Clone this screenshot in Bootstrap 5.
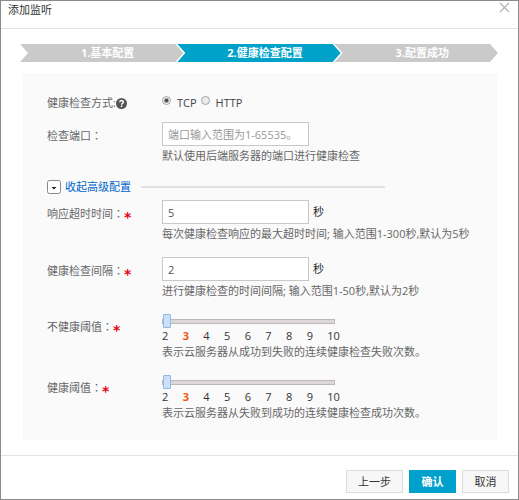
<!DOCTYPE html>
<html lang="zh-CN">
<head>
  <meta charset="UTF-8">
  <meta name="viewport" content="width=device-width, initial-scale=1">
  <title>添加监听</title>
  <!-- Bootstrap 5 CDN -->
  <link href="https://cdn.jsdelivr.net/npm/bootstrap@5.3.0/dist/css/bootstrap.min.css" rel="stylesheet">
  <style>
    body {
      font-family: "Open Sans", "Noto Sans CJK SC", sans-serif;
      font-size: 11px;
      line-height: 16px;
      color: #666;
    }
    .dialog-box { border: 1px solid #8a8a8a; background: #fff; }
    .dialog-head { height: 28px; padding: 1px 8px 0 7px; border-bottom: 1px solid #e3e3e3; }
    .dialog-head h1 { font-size: 11px; line-height: 16px; color: #333; }
    .close-x { width: 12px; height: 12px; }
    .close-x svg { width: 12px; height: 12px; }
    .dialog-main { padding: 15px 20px 15px 19px; }

    /* ステップ表示 */
    .step-item {
      height: 18px;
      padding-left: 12px;
      line-height: 18px;
      background: #cacaca;
      color: #fff;
      clip-path: polygon(0 0, calc(100% - 8px) 0, 100% 50%, calc(100% - 8px) 100%, 0 100%, 8px 50%);
    }
    .step-item + .step-item { margin-left: -6px; }
    .step-item.current { background: #00a2ca; }

    .config-panel { margin: 11px 1px 0 3px; padding: 22px 24px 4px; background: #fafafa; }
    .field-row { display: grid; grid-template-columns: 115px minmax(0, 1fr); margin-bottom: 15px; }
    .field-row.tight { margin-bottom: 11px; }
    .field-name { padding-top: 5px; }
    .tight .field-name { padding-top: 0; }
    .colon { font-family: "Noto Sans CJK TC", sans-serif; }
    .star { color: #e60012; font-family: "DejaVu Sans", sans-serif; font-size: 14px; font-weight: bold; line-height: 1; vertical-align: -4px; }
    .help-icon { width: 11px; height: 11px; }
    .text-field {
      width: 147px;
      height: 24px;
      padding: 0 5px;
      font-size: 11px;
      line-height: 16px;
      color: #555;
      border: 1px solid #c8c8c8;
      background: #fff;
    }
    .text-field::placeholder { color: #999; opacity: 1; }
    .hint { margin: 2px 0 0; }

    .choice-label { color: #444; }
    .choice {
      appearance: none;
      width: 9px;
      height: 9px;
      margin: 1px 6px 0 0;
      border: 1px solid #a5a5a5;
      border-radius: 50%;
      background: #ececec;
    }
    .choice:checked { background: radial-gradient(circle, #444 0 1px, #f2f2f2 3px); }

    .toggle-row { margin-bottom: 5px; }
    .toggle-btn { gap: 4px; color: #0066cc; line-height: 16px; }
    .toggle-btn svg { width: 14px; height: 14px; }
    .toggle-line { width: 244px; height: 2px; margin-left: 10px; background: #e3e3e3; }

    /* スライダー */
    .level-range { appearance: none; width: 173px; height: 14px; margin: 0; background: transparent; }
    .level-range::-webkit-slider-runnable-track { height: 5px; border: 1px solid #bdb9b9; background: #dcd8d8; }
    .level-range::-webkit-slider-thumb {
      appearance: none;
      width: 8px;
      height: 14px;
      margin-top: -6px;
      border: 1px solid #92b8e6;
      border-radius: 1px;
      background: #cbe0fa;
    }
    .level-range::-moz-range-track { height: 3px; border: 1px solid #bdb9b9; background: #dcd8d8; }
    .level-range::-moz-range-thumb { width: 6px; height: 12px; border: 1px solid #92b8e6; border-radius: 1px; background: #cbe0fa; }
    .level-marks { display: grid; grid-template-columns: repeat(9, 1fr); width: 186px; color: #333; }
    .level-marks .hot { color: #f0560f; }
    .slider-row .hint { margin-top: 0; }
    .slider-row .field-name { padding-top: 4px; }

    .dialog-foot { gap: 6px; padding: 14px 9px 6px; border-top: 1px solid #e3e3e3; }
    .foot-btn {
      min-width: 47px;
      height: 23px;
      padding: 0 11px;
      font-size: 11px;
      line-height: 16px;
      color: #333;
      border: 1px solid #ddd;
      border-radius: 0;
      background: #f7f7f7;
    }
    .foot-btn.main-btn { color: #fff; border-color: #00a0cc; background: #00a0cc; }
  </style>
</head>
<body>
  <div class="dialog-box d-flex flex-column min-vh-100">
    <header class="dialog-head d-flex justify-content-between align-items-start">
      <h1 class="m-0 fw-normal">添加监听</h1>
      <button type="button" class="close-x btn p-0 border-0 d-flex" aria-label="关闭">
        <svg viewBox="0 0 12 12" fill="none" stroke="#b5b5b5" stroke-width="1.3"><path d="M2 1L11 10M11 1L2 10"/></svg>
      </button>
    </header>

    <main class="dialog-main flex-grow-1">
      <ol class="list-unstyled d-flex m-0 text-center fw-bold">
        <li class="step-item flex-fill w-100">1.基本配置</li>
        <li class="step-item current flex-fill w-100" aria-current="step">2.健康检查配置</li>
        <li class="step-item flex-fill w-100">3.配置成功</li>
      </ol>

      <form class="config-panel">
        <!-- 检查方式 -->
        <div class="field-row tight" role="radiogroup" aria-labelledby="modeName">
          <div class="field-name d-flex align-items-center">
            <span id="modeName">健康检查方式:</span>
            <svg class="help-icon" viewBox="0 0 11 11"><circle cx="5.500" cy="5.500" r="5.500" fill="#555"/><path d="M3.700 4.200C3.700 1.900 7.400 1.900 7.400 4.100C7.400 5.400 5.600 5.300 5.600 6.700" fill="none" stroke="#fff" stroke-width="1.400"/><rect x="4.800" y="7.500" width="1.500" height="1.500" fill="#fff"/></svg>
          </div>
          <div class="d-flex gap-1">
            <label class="choice-label d-flex"><input class="choice" type="radio" name="mode" checked>TCP</label>
            <label class="choice-label d-flex"><input class="choice" type="radio" name="mode">HTTP</label>
          </div>
        </div>

        <div class="field-row">
          <label class="field-name" for="port">检查端口<span class="colon" lang="zh-TW">：</span></label>
          <div>
            <input class="text-field d-block" type="text" id="port" placeholder="端口输入范围为1-65535。">
            <p class="hint">默认使用后端服务器的端口进行健康检查</p>
          </div>
        </div>

        <!-- 高级配置 -->
        <div class="toggle-row d-flex align-items-center">
          <button type="button" class="toggle-btn d-flex align-items-center border-0 bg-transparent p-0" aria-expanded="true">
            <svg viewBox="0 0 14 14"><rect x=".5" y=".5" width="13" height="13" rx="2" fill="#fff" stroke="#888"/><path d="M4.500 7H9.500L7 9.500Z" fill="#222"/></svg>
            <span>收起高级配置</span>
          </button>
          <div class="toggle-line"></div>
        </div>

        <div class="field-row">
          <label class="field-name" for="timeout">响应超时时间<span class="colon" lang="zh-TW">：</span><span class="star">*</span></label>
          <div>
            <div class="d-flex align-items-center gap-1">
              <input class="text-field" type="text" id="timeout" value="5">
              <span class="text-dark">秒</span>
            </div>
            <p class="hint">每次健康检查响应的最大超时时间; 输入范围1-300秒,默认为5秒</p>
          </div>
        </div>

        <div class="field-row">
          <label class="field-name" for="interval">健康检查间隔<span class="colon" lang="zh-TW">：</span><span class="star">*</span></label>
          <div>
            <div class="d-flex align-items-center gap-1">
              <input class="text-field" type="text" id="interval" value="2">
              <span class="text-dark">秒</span>
            </div>
            <p class="hint">进行健康检查的时间间隔; 输入范围1-50秒,默认为2秒</p>
          </div>
        </div>

        <div class="field-row slider-row">
          <label class="field-name" for="unhealthy">不健康阈值<span class="colon" lang="zh-TW">：</span><span class="star">*</span></label>
          <div>
            <input class="level-range d-block" type="range" id="unhealthy" min="2" max="10" value="2">
            <div class="level-marks">
              <span>2</span><span class="hot fw-bold">3</span><span>4</span><span>5</span><span>6</span><span>7</span><span>8</span><span>9</span><span>10</span>
            </div>
            <p class="hint">表示云服务器从成功到失败的连续健康检查失败次数。</p>
          </div>
        </div>

        <div class="field-row slider-row">
          <label class="field-name" for="healthy">健康阈值<span class="colon" lang="zh-TW">：</span><span class="star">*</span></label>
          <div>
            <input class="level-range d-block" type="range" id="healthy" min="2" max="10" value="2">
            <div class="level-marks">
              <span>2</span><span class="hot fw-bold">3</span><span>4</span><span>5</span><span>6</span><span>7</span><span>8</span><span>9</span><span>10</span>
            </div>
            <p class="hint">表示云服务器从失败到成功的连续健康检查成功次数。</p>
          </div>
        </div>
      </form>
    </main>

    <footer class="dialog-foot d-flex justify-content-end">
      <button type="button" class="foot-btn btn">上一步</button>
      <button type="button" class="foot-btn main-btn btn fw-bold">确认</button>
      <button type="button" class="foot-btn btn">取消</button>
    </footer>
  </div>

  <script src="https://cdn.jsdelivr.net/npm/bootstrap@5.3.0/dist/js/bootstrap.bundle.min.js"></script>
</body>
</html>
